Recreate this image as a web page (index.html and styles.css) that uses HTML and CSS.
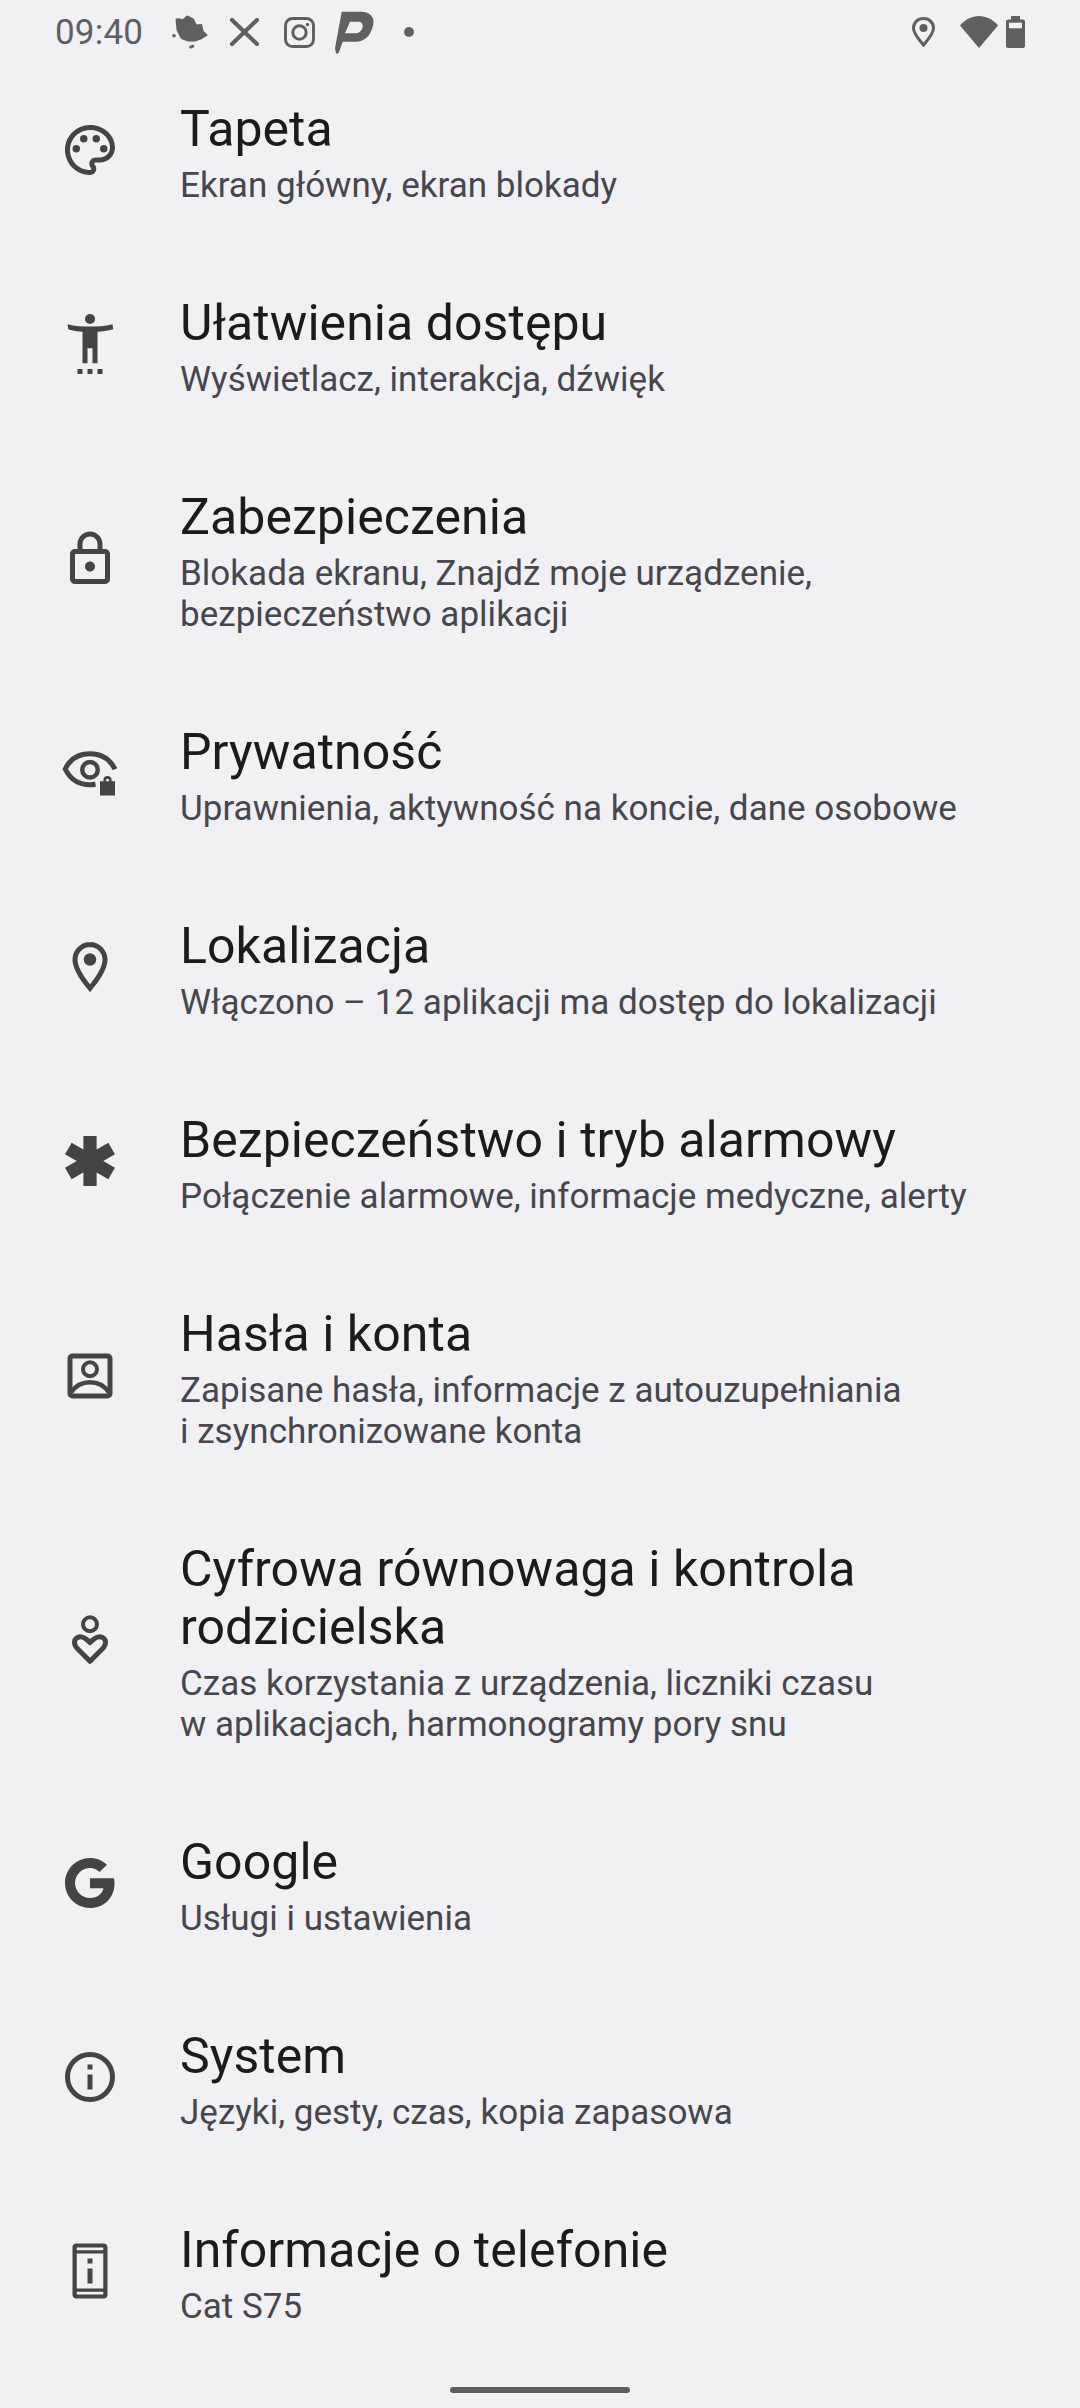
FILE: index.html
```html
<!DOCTYPE html>
<html lang="pl">
<head>
<meta charset="utf-8">
<title>Ustawienia</title>
<link rel="stylesheet" href="styles.css">
</head>
<body>
<header class="status">
  <span class="time">09:40</span>
  <svg class="si leaf" viewBox="0 0 36 34"><path class="soft" d="M4.500 4.500Q8 3.500 10.700 5.500L15.300 1.500 21 4.500 24 10.500 29.200 10 30.800 16.700 34.500 20 29.700 23 23 25.500H16.300L9.700 23 5.500 15z"/><circle cx="2" cy="20.700" r="1.800"/><ellipse cx="19.700" cy="31.700" rx="2.700" ry="1.600" transform="rotate(-20 19.700 31.700)"/></svg>
  <svg class="si x" viewBox="0 0 29 28"><path d="M2 2l25 24M27 2L2 26"/></svg>
  <svg class="si insta" viewBox="0 0 31 31"><rect x="1.500" y="1.500" width="28" height="28" rx="7"/><circle cx="15.500" cy="15.500" r="6.700"/><circle class="fill" cx="23.500" cy="7.500" r="1.700"/></svg>
  <svg class="si pp" viewBox="0 0 39 43"><path fill-rule="evenodd" d="M6.700.7H25C33 0 39 5 38.500 11 38 18 34 30 21.700 30.700H7.700L4 41C3.500 42.500 1.500 43 1 42.300L0 37.300zM15 10.700L10 22.300H21C25 22.300 28 18 27.700 14.500 27.500 12 26 10.700 24 10.700z"/></svg>
  <span class="dot"></span>
  <span class="spacer"></span>
  <svg class="si pin" viewBox="0 0 23 30"><path d="M11.500 1.500C5.500 1.500 1.500 6 1.500 11c0 6 6 12 10 17 4-5 10-11 10-17 0-5-4-9.500-10-9.500z"/><circle class="fill" cx="11.500" cy="11" r="4"/></svg>
  <svg class="si wifi" viewBox="0 0 38 32"><path d="M19 32L0 9.500C5 3.500 12 0 19 0s14 3.500 19 9.500z"/></svg>
  <svg class="si batt" viewBox="0 0 19 32"><path d="M5 0h9v3.500h3c1 0 2 1 2 2V30c0 1-1 2-2 2H2c-1 0-2-1-2-2V5.500c0-1 1-2 2-2h3z"/><rect class="hole" x="3" y="6.700" width="13" height="5.600"/></svg>
</header>

<main class="list">
  <section class="item">
    <svg class="icon" viewBox="0 0 24 24"><path class="solid" d="M12 22C6.490 22 2 17.510 2 12S6.490 2 12 2s10 4.040 10 9c0 3.310-2.690 6-6 6h-1.770c-.28 0-.5.220-.5.500 0 .120.050.230.130.330.410.470.640 1.060.640 1.670 0 1.380-1.120 2.500-2.500 2.500zm0-18c-4.410 0-8 3.590-8 8s3.590 8 8 8c.280 0 .5-.220.5-.5 0-.160-.080-.280-.140-.350-.410-.460-.630-1.050-.630-1.650 0-1.380 1.120-2.500 2.500-2.500H16c2.210 0 4-1.790 4-4 0-3.860-3.590-7-8-7z"/><circle class="fill" cx="6.500" cy="11.500" r="1.500"/><circle class="fill" cx="9.500" cy="7.500" r="1.500"/><circle class="fill" cx="14.500" cy="7.500" r="1.500"/><circle class="fill" cx="17.500" cy="11.500" r="1.500"/></svg>
    <div class="text"><h2>Tapeta</h2><p>Ekran główny, ekran blokady</p></div>
  </section>
  <section class="item">
    <svg class="icon" viewBox="0 0 24 24"><g class="solid"><circle cx="12" cy="2" r="2"/><path d="M3 4.100C6 4.900 9 5 12 5s6-.1 9-.9l.3 2C19 6.600 17 7 15 7.100V19.700H13V13.700H11V19.700H9V7.100C7 7 5 6.600 3.300 6.100z"/><rect x="7" y="22" width="2" height="2"/><rect x="11" y="22" width="2" height="2"/><rect x="15" y="22" width="2" height="2"/></g></svg>
    <div class="text"><h2>Ułatwienia dostępu</h2><p>Wyświetlacz, interakcja, dźwięk</p></div>
  </section>
  <section class="item">
    <svg class="icon" viewBox="0 0 24 24"><path class="solid" d="M18 8h-1V6c0-2.760-2.240-5-5-5S7 3.240 7 6v2H6c-1.100 0-2 .9-2 2v10c0 1.100.9 2 2 2h12c1.100 0 2-.9 2-2V10c0-1.100-.9-2-2-2zM9 6c0-1.660 1.340-3 3-3s3 1.340 3 3v2H9V6zm9 14H6V10h12v10zm-6-3c1.100 0 2-.9 2-2s-.9-2-2-2-2 .9-2 2 .9 2 2 2z"/></svg>
    <div class="text"><h2>Zabezpieczenia</h2><p>Blokada ekranu, Znajdź moje urządzenie,<br>bezpieczeństwo aplikacji</p></div>
  </section>
  <section class="item">
    <svg class="icon" viewBox="0 0 24 24"><path d="M22 10.500C20 6.500 16.500 4.300 12 4.300 7.500 4.300 4 6.500 2.100 10.400 4 14.300 7.500 16.700 12 16.700c.8 0 1.500-.1 2.200-.2"/><circle class="s18" cx="12" cy="10.700" r="3.100"/><rect class="fill" x="16" y="15.300" width="6" height="5.700"/><path class="s11" d="M17.900 15.500v-.7a1.100 1.100 0 0 1 2.200 0v.7"/></svg>
    <div class="text"><h2>Prywatność</h2><p>Uprawnienia, aktywność na koncie, dane osobowe</p></div>
  </section>
  <section class="item">
    <svg class="icon" viewBox="0 0 24 24"><path d="M12 3C8.700 3 6 5.700 6 9c0 4 3.500 8.500 6 11.500 2.500-3 6-7.500 6-11.500 0-3.300-2.700-6-6-6z"/><circle class="fill" cx="12" cy="9" r="2.500"/></svg>
    <div class="text"><h2>Lokalizacja</h2><p>Włączono – 12 aplikacji ma dostęp do lokalizacji</p></div>
  </section>
  <section class="item">
    <svg class="icon" viewBox="0 0 24 24"><path class="star" d="M12 2v20M3.340 7l17.320 10M20.660 7L3.340 17"/></svg>
    <div class="text"><h2>Bezpieczeństwo i tryb alarmowy</h2><p>Połączenie alarmowe, informacje medyczne, alerty</p></div>
  </section>
  <section class="item">
    <svg class="icon" viewBox="0 0 24 24"><rect x="4" y="4" width="16" height="16" rx="1"/><circle class="s16" cx="12" cy="9.300" r="2.800"/><path class="s18" d="M4.500 18.500C6.500 15.500 9 14.500 12 14.500s5.500 1 7.500 4"/></svg>
    <div class="text"><h2>Hasła i konta</h2><p>Zapisane hasła, informacje z autouzupełniania<br>i zsynchronizowane konta</p></div>
  </section>
  <section class="item">
    <svg class="icon" viewBox="0 0 24 24"><circle class="s16" cx="12" cy="5.700" r="2.800"/><path class="round" d="M12 20.500L7 15.500C5.300 13.800 5.500 11.700 7 11 8.500 10.200 9.800 10.700 12 13c2.200-2.300 3.500-2.800 5-2 1.500.7 1.700 2.800 0 4.500z"/></svg>
    <div class="text"><h2>Cyfrowa równowaga i kontrola<br>rodzicielska</h2><p>Czas korzystania z urządzenia, liczniki czasu<br>w aplikacjach, harmonogramy pory snu</p></div>
  </section>
  <section class="item">
    <svg class="icon" viewBox="0 0 24 24"><path class="solid" d="M12 2c2.800 0 5 1 6.800 2.700l-3 2.900C14.700 6.600 13.500 6 12 6 8.700 6 6 8.700 6 12s2.700 6 6 6c2.900 0 4.900-1.600 5.400-3.900H12V10.100h9.600c.1.600.2 1.300.2 2C21.800 18 17.600 22 12 22 6.500 22 2 17.500 2 12S6.500 2 12 2z"/></svg>
    <div class="text"><h2>Google</h2><p>Usługi i ustawienia</p></div>
  </section>
  <section class="item">
    <svg class="icon" viewBox="0 0 24 24"><circle cx="12" cy="12" r="9"/><g class="solid"><rect x="11" y="7" width="2" height="2"/><rect x="11" y="11" width="2" height="6"/></g></svg>
    <div class="text"><h2>System</h2><p>Języki, gesty, czas, kopia zapasowa</p></div>
  </section>
  <section class="item">
    <svg class="icon" viewBox="0 0 24 24"><path class="solid" fill-rule="evenodd" d="M6.500 1h11c.9 0 1.500.7 1.500 1.500v19c0 .8-.6 1.500-1.500 1.500h-11C5.600 23 5 22.300 5 21.500v-19C5 1.700 5.600 1 6.500 1zM6.700 2.600v1.100h10.600V2.600zM6.700 5v14h10.600V5zM6.700 20.300v1.100h10.600v-1.100z"/><g class="solid"><rect x="11" y="7" width="2" height="2"/><rect x="11" y="11" width="2" height="6"/></g></svg>
    <div class="text"><h2>Informacje o telefonie</h2><p>Cat S75</p></div>
  </section>
</main>
<div class="nav"><span class="handle"></span></div>
</body>
</html>
```
FILE: styles.css
```css
* { box-sizing: border-box; }
html, body { margin: 0; padding: 0; }
body {
  width: 1080px;
  height: 2408px;
  overflow: hidden;
  background: #f1f0f5;
  font-family: Roboto, sans-serif;
  display: flex;
  flex-direction: column;
}
.status {
  height: 64px;
  display: flex;
  align-items: center;
  padding: 0 55px;
  color: #5f5f63;
  flex: none;
}
.time { font-size: 35px; letter-spacing: 0.200px; width: 87px; flex: none; }
.si { display: block; flex: none; fill: #606064; }
.leaf { width: 36px; height: 34px; margin-left: 30px; }
.soft { stroke: #606064; stroke-width: 2; stroke-linejoin: round; }
.x { width: 29px; height: 28px; margin-left: 22px; fill: none; stroke: #606064; stroke-width: 4.200; stroke-linecap: round; }
.insta { width: 31px; height: 31px; margin-left: 25px; fill: none; stroke: #606064; stroke-width: 3; }
.insta .fill { fill: #606064; stroke: none; }
.pp { width: 39px; height: 43px; margin-left: 20px; }
.dot { width: 10px; height: 10px; border-radius: 50%; background: #606064; margin-left: 30px; }
.spacer { flex: 1; }
.pin { width: 23px; height: 30px; fill: none; stroke: #606064; stroke-width: 3; }
.pin .fill { fill: #606064; stroke: none; }
.wifi { width: 38px; height: 32px; margin-left: 25px; }
.batt { width: 19px; height: 32px; margin-left: 8px; }
.hole { fill: #f1f0f5; }
.list { display: flex; flex-direction: column; flex: none; }
.item {
  display: flex;
  align-items: center;
  padding: 36px 40px 52px 60px;
}
.icon {
  width: 60px;
  height: 60px;
  flex: none;
  margin-right: 60px;
  margin-bottom: 6px;
  fill: none;
  stroke: #43444a;
  stroke-width: 2;
}
.icon .fill, .icon .solid { fill: #43444a; stroke: none; }
.icon .s11 { stroke-width: 1.100; }
.icon .s16 { stroke-width: 1.600; }
.icon .s18 { stroke-width: 1.800; }
.icon .star { stroke-width: 5.300; }
.icon .round { stroke-linejoin: round; }
.text { flex: 1; min-width: 0; }
h2 {
  margin: 0 0 7px;
  font-size: 50px;
  line-height: 58px;
  font-weight: 400;
  letter-spacing: 0.060px;
  color: #1b1b1f;
}
p {
  margin: 0;
  font-size: 35px;
  line-height: 41px;
  letter-spacing: 0.020px;
  color: #46464c;
}
.nav { flex: 1; display: flex; justify-content: center; align-items: flex-end; padding-bottom: 15px; }
.handle { width: 180px; height: 6px; border-radius: 3px; background: #5f5f63; }
```
